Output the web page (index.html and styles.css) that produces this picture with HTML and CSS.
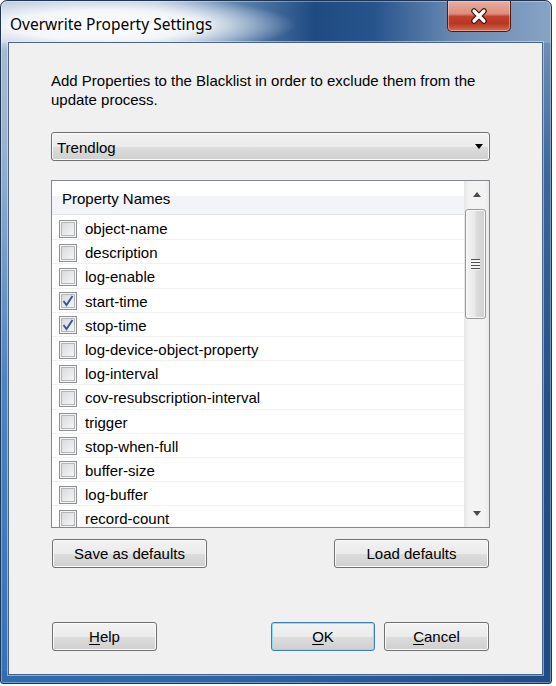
FILE: index.html
```html
<!DOCTYPE html>
<html lang="en">
<head>
    <meta charset="UTF-8">
    <meta name="viewport" content="width=device-width, initial-scale=1.0">
    <title>Overwrite Property Settings</title>
    <link rel="stylesheet" href="styles.css">
</head>
<body>
    <div class="window">
        <div class="titlebar">
            <span class="title">Overwrite Property Settings</span>
            <button class="close" title="Close">
                <svg width="18" height="16" viewBox="0 0 18 16">
                    <path d="M4 3 L14 13 M14 3 L4 13" stroke="#3a1410" stroke-width="5.5" stroke-linecap="round"/>
                    <path d="M4 3 L14 13 M14 3 L4 13" stroke="#ffffff" stroke-width="3.2" stroke-linecap="round"/>
                </svg>
            </button>
        </div>
        <div class="client">
            <p class="intro">Add Properties to the Blacklist in order to exclude them from the<br>update process.</p>

            <div class="combo">
                <span>Trendlog</span>
                <span class="combo-arrow"></span>
            </div>

            <div class="list">
                <div class="list-main">
                    <div class="list-header">Property Names</div>
                    <div class="list-rows">
                        <div class="row"><span class="check"></span>object-name</div>
                        <div class="row"><span class="check"></span>description</div>
                        <div class="row"><span class="check"></span>log-enable</div>
                        <div class="row"><span class="check checked"><svg width="16" height="16" viewBox="0 0 16 16"><path d="M3.5 8 L6.5 12 L12.5 3" fill="none" stroke="#3f5896" stroke-width="2"/></svg></span>start-time</div>
                        <div class="row"><span class="check checked"><svg width="16" height="16" viewBox="0 0 16 16"><path d="M3.5 8 L6.5 12 L12.5 3" fill="none" stroke="#3f5896" stroke-width="2"/></svg></span>stop-time</div>
                        <div class="row"><span class="check"></span>log-device-object-property</div>
                        <div class="row"><span class="check"></span>log-interval</div>
                        <div class="row"><span class="check"></span>cov-resubscription-interval</div>
                        <div class="row"><span class="check"></span>trigger</div>
                        <div class="row"><span class="check"></span>stop-when-full</div>
                        <div class="row"><span class="check"></span>buffer-size</div>
                        <div class="row"><span class="check"></span>log-buffer</div>
                        <div class="row"><span class="check"></span>record-count</div>
                    </div>
                </div>
                <div class="scrollbar">
                    <div class="sb-button"><span class="sb-up"></span></div>
                    <div class="sb-thumb"><span class="grip"></span></div>
                    <div class="sb-track"></div>
                    <div class="sb-button"><span class="sb-down"></span></div>
                </div>
            </div>

            <div class="defaults">
                <button class="btn wide">Save as defaults</button>
                <button class="btn wide">Load defaults</button>
            </div>

            <div class="actions">
                <button class="btn"><u>H</u>elp</button>
                <div class="actions-right">
                    <button class="btn default"><u>O</u>K</button>
                    <button class="btn"><u>C</u>ancel</button>
                </div>
            </div>
        </div>
    </div>
</body>
</html>
```

FILE: styles.css
```css
body
{
    margin: 0;
    background-color: #ffffff;
    font-family: "Liberation Sans", Arial, sans-serif;
}
.window
{
    box-sizing: border-box;
    width: 552px;
    height: 684px;
    border: 1px solid #1f3552;
    border-radius: 7px 7px 3px 3px;
    padding: 0 8px 8px 7px;
    display: flex;
    flex-direction: column;
    box-shadow: inset 0 0 0 1px rgba(255, 255, 255, 0.35);
    background:
        radial-gradient(190px 30px at 105px 24px, rgba(255, 255, 255, 1) 0%, rgba(255, 255, 255, 0.85) 50%, rgba(255, 255, 255, 0) 100%) no-repeat,
        linear-gradient(to right, #b6c7dc 0%, #aec1d8 28%, #5a7fac 44%, #1f4b82 57%, #28548d 68%, #6788b1 82%, #87a3c4 100%) top / 100% 42px no-repeat,
        linear-gradient(to right, #2f6cb2 0%, #2a62a6 50%, #1e4c87 100%) bottom / 100% 12px no-repeat,
        linear-gradient(to bottom, #a9bdd5 0%, #9cb3cf 20%, #4d85c3 55%, #3471b7 100%) left / 9px 100% no-repeat,
        linear-gradient(to bottom, #7d9ac0 0%, #3b689f 25%, #214f8a 60%, #1e4b86 100%) right / 10px 100% no-repeat;
}
.titlebar
{
    height: 41px;
    flex-shrink: 0;
    display: flex;
    justify-content: space-between;
    align-items: flex-start;
}
.title
{
    margin-left: 2px;
    margin-top: 12px;
    font-family: "Noto Sans", sans-serif;
    font-size: 15.5px;
    color: #000000;
    text-shadow: 0 0 6px rgba(255, 255, 255, 0.9);
}
.close
{
    width: 64px;
    height: 31px;
    margin-right: 32px;
    padding: 0;
    border: 1px solid #4b1d17;
    border-top: none;
    border-radius: 0 0 5px 5px;
    background: linear-gradient(to bottom, #e9ada0 0%, #dc8e7c 42%, #c3412d 52%, #b8381f 75%, #d66a52 100%);
    box-shadow: inset 0 0 0 1px rgba(255, 220, 210, 0.45);
    display: flex;
    justify-content: center;
    align-items: center;
}
.client
{
    flex: 1;
    border: 1px solid #4c6482;
    box-shadow: 0 0 0 1px rgba(230, 240, 250, 0.5);
    background-color: #f0f0f0;
    padding: 29px 52px 0 42px;
    display: flex;
    flex-direction: column;
    font-size: 15px;
    color: #000000;
}
.intro
{
    margin: 0;
    line-height: 18.5px;
}
.combo
{
    box-sizing: border-box;
    height: 29px;
    margin-top: 23px;
    border: 1px solid #707070;
    border-radius: 3px;
    padding: 0 6px 0 5px;
    display: flex;
    justify-content: space-between;
    align-items: center;
    background: linear-gradient(to bottom, #f2f2f2 0%, #ebebeb 50%, #dddddd 51%, #cfcfcf 100%);
    box-shadow: inset 0 0 0 1px #fbfbfb;
}
.combo span:first-child
{
    padding-top: 2px;
}
.combo-arrow
{
    width: 0;
    height: 0;
    border-left: 4px solid transparent;
    border-right: 4px solid transparent;
    border-top: 5px solid #000000;
}
.list
{
    box-sizing: border-box;
    height: 348px;
    margin-top: 19px;
    border: 1px solid #828790;
    background-color: #ffffff;
    display: flex;
    overflow: hidden;
}
.list-main
{
    flex: 1;
    overflow: hidden;
}
.list-header
{
    box-sizing: border-box;
    height: 34px;
    padding: 9px 0 0 10px;
    border-bottom: 1px solid #e2e3e5;
    background: linear-gradient(to bottom, #ffffff 0%, #ffffff 45%, #f2f4f7 46%, #f2f4f7 100%);
}
.list-rows
{
    padding-top: 1px;
}
.row
{
    box-sizing: border-box;
    height: 24.2px;
    padding: 2px 0 0 7px;
    border-bottom: 1px solid #f0f0f0;
    display: flex;
    align-items: center;
    gap: 8px;
}
.check
{
    box-sizing: border-box;
    width: 18px;
    height: 18px;
    flex-shrink: 0;
    border: 1px solid #8e8f8f;
    background: linear-gradient(135deg, #d3d5d9 0%, #e9eaec 55%, #f8f8f8 100%);
    box-shadow: inset 0 0 0 1px #f7f7f7, inset 0 0 0 2px #b3b5b9;
    display: flex;
    justify-content: center;
    align-items: center;
}
.scrollbar
{
    width: 25px;
    flex-shrink: 0;
    display: flex;
    flex-direction: column;
    background: linear-gradient(to right, #e6e6e6 0%, #f3f3f3 20%, #f3f3f3 80%, #eaeaea 100%);
}
.sb-button
{
    height: 27px;
    flex-shrink: 0;
    display: flex;
    justify-content: center;
    align-items: center;
}
.sb-up
{
    width: 0;
    height: 0;
    border-left: 4.5px solid transparent;
    border-right: 4.5px solid transparent;
    border-bottom: 5px solid #4b4b4b;
}
.sb-down
{
    width: 0;
    height: 0;
    border-left: 4.5px solid transparent;
    border-right: 4.5px solid transparent;
    border-top: 5px solid #4b4b4b;
}
.sb-thumb
{
    box-sizing: border-box;
    height: 110px;
    margin: 1px 3px 0 1px;
    border: 1px solid #989898;
    border-radius: 3px;
    background: linear-gradient(to right, #f3f3f3 0%, #e9e9e9 45%, #dcdcdc 55%, #cfcfcf 100%);
    box-shadow: inset 0 0 0 1px #fafafa;
    display: flex;
    justify-content: center;
    align-items: center;
}
.grip
{
    width: 9px;
    height: 11px;
    background: repeating-linear-gradient(to bottom, #505050 0px, #505050 1px, #f6f6f6 1px, #f6f6f6 3px);
}
.sb-track
{
    flex: 1;
}
.btn
{
    box-sizing: border-box;
    height: 29px;
    padding: 0;
    border: 1px solid #707070;
    border-radius: 3px;
    font-family: "Liberation Sans", Arial, sans-serif;
    font-size: 15px;
    color: #000000;
    background: linear-gradient(to bottom, #f2f2f2 0%, #ebebeb 50%, #dddddd 51%, #cfcfcf 100%);
    box-shadow: inset 0 0 0 1px #fbfbfb;
    width: 105px;
}
.btn u
{
    text-underline-offset: 2px;
}
.btn.wide
{
    width: 155px;
}
.btn.default
{
    width: 104px;
    border-color: #3c7fb1;
    box-shadow: inset 0 0 0 1px #8fdcf7;
}
.defaults
{
    margin-top: 11px;
    padding: 0 1px;
    display: flex;
    justify-content: space-between;
}
.actions
{
    margin-top: 54px;
    padding: 0 1px;
    display: flex;
    justify-content: space-between;
}
.actions-right
{
    display: flex;
    gap: 9px;
}
```
